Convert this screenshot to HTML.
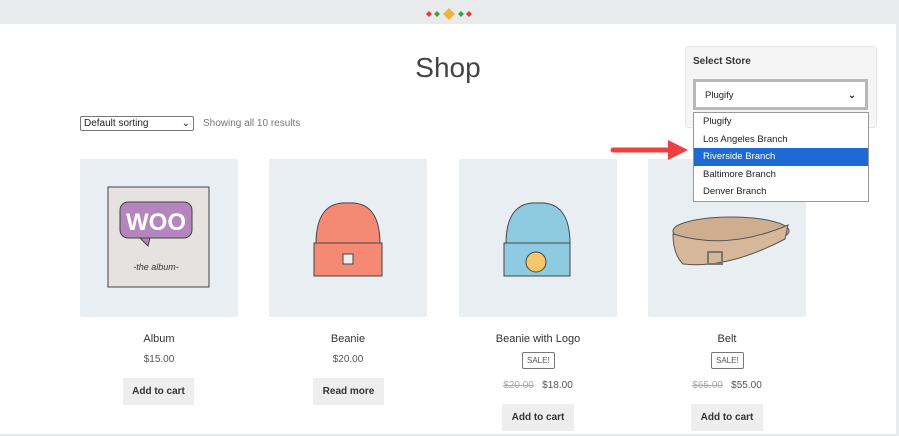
<!DOCTYPE html>
<html><head><meta charset="utf-8"><style>
*{margin:0;padding:0;box-sizing:border-box}
body{width:899px;height:436px;background:#e9eaec;font-family:"Liberation Sans",sans-serif;position:relative;overflow:hidden;color:#43454b}
#main{position:absolute;left:0;top:24px;width:896px;height:410px;background:#fff}
.abs{position:absolute}
h1{position:absolute;left:0;width:896px;top:52px;text-align:center;font-weight:normal;font-size:28px;color:#444}
.sort{left:80px;top:116px;width:114px;height:15px;border:1px solid #767676;border-radius:2px;font-size:10px;padding:1px 3px;color:#222}
.cnt{left:203px;top:118px;font-size:10px;color:#777}
.img{width:158px;height:158px;top:159px;background:#e8eef2;border-radius:2px}
.t{font-size:11px;text-align:center;width:158px;color:#333}
.p{font-size:10px;text-align:center;width:158px;color:#555}
.btn{background:#eeeeee;font-size:10px;font-weight:bold;text-align:center;line-height:27px;height:27px;color:#333}
.sale{border:1px solid #777;border-radius:2px;font-size:8px;padding:3px 4px;color:#555}
.s{text-decoration:line-through;color:#aaa}
</style></head><body>
<svg class="abs" style="left:424px;top:7px" width="50" height="14"><g fill="#e53935"><path d="M2 7l3-3 3 3-3 3z"/><path d="M42 7l3-3 3 3-3 3z"/></g><g fill="#43a047"><path d="M10 7l3-3 3 3-3 3z"/><path d="M34 7l3-3 3 3-3 3z"/></g><path d="M19 7l6-6 6 6-6 6z" fill="#f0b43c"/></svg>
<div id="main"></div>
<h1>Shop</h1>
<div class="abs sort">Default sorting<span style="float:right">⌄</span></div>
<div class="abs cnt">Showing all 10 results</div>

<div class="abs img" style="left:80px"><svg width="158" height="158"><rect x="28" y="28" width="101" height="100" fill="#e5e2df" stroke="#444"/><rect x="40" y="43" width="72" height="36" rx="8" fill="#b586bd" stroke="#444"/><path d="M60 79 l8 8 l2 -8z" fill="#b586bd" stroke="#444"/><text x="76" y="71" font-size="24" font-weight="bold" fill="#fff" text-anchor="middle" font-family="Liberation Sans">WOO</text><text x="76" y="111" font-size="9" font-style="italic" fill="#333" text-anchor="middle">-the  album-</text></svg></div>
<div class="abs img" style="left:269px"><svg width="158" height="158"><path d="M47 85 Q47 42 79 44 Q111 42 111 85z" fill="#f48a74" stroke="#444"/><rect x="45" y="84" width="68" height="33" fill="#f48a74" stroke="#444"/><rect x="74" y="95" width="10" height="10" fill="#eee" stroke="#444"/></svg></div>
<div class="abs img" style="left:459px"><svg width="158" height="158"><path d="M47 85 Q47 42 79 44 Q111 42 111 85z" fill="#8fcbe0" stroke="#444"/><rect x="45" y="84" width="66" height="33" fill="#8fcbe0" stroke="#444"/><circle cx="77" cy="103" r="10" fill="#f4c76a" stroke="#444"/></svg></div>
<div class="abs img" style="left:648px"><svg width="158" height="158"><ellipse cx="83" cy="72" rx="58" ry="14" fill="#cfae8f" stroke="#555"/><path d="M25 75 Q25 95 35 105 Q80 110 137 80 L140 66 Q80 92 25 75z" fill="#d6b79a" stroke="#555"/><rect x="60" y="93" width="14" height="12" fill="none" stroke="#777" stroke-width="2"/></svg></div>

<div class="abs t" style="left:80px;top:333px">Album</div>
<div class="abs p" style="left:80px;top:354px">$15.00</div>
<div class="abs btn" style="left:123px;top:378px;width:71px">Add to cart</div>
<div class="abs t" style="left:269px;top:333px">Beanie</div>
<div class="abs p" style="left:269px;top:354px">$20.00</div>
<div class="abs btn" style="left:313px;top:378px;width:71px">Read more</div>
<div class="abs t" style="left:459px;top:333px">Beanie with Logo</div>
<div class="abs sale" style="left:522px;top:352px">SALE!</div>
<div class="abs p" style="left:459px;top:380px"><span class="s">$20.00</span>&nbsp;&nbsp; $18.00</div>
<div class="abs btn" style="left:502px;top:404px;width:72px">Add to cart</div>
<div class="abs t" style="left:648px;top:333px">Belt</div>
<div class="abs sale" style="left:711px;top:352px">SALE!</div>
<div class="abs p" style="left:648px;top:380px"><span class="s">$65.00</span>&nbsp;&nbsp; $55.00</div>
<div class="abs btn" style="left:691px;top:404px;width:72px">Add to cart</div>

<div class="abs" style="left:685px;top:46px;width:192px;height:82px;background:#f5f5f5;border:1px solid #e6e6e6;border-radius:3px"></div>
<div class="abs" style="left:693px;top:56px;font-size:10px;font-weight:bold;color:#333">Select Store</div>
<div class="abs" style="left:693px;top:79px;width:175px;height:31px;background:#fff;border:3px solid #b8b8b8;font-size:9.5px;padding:8px 9px;color:#222">Plugify<span style="float:right;font-weight:bold">⌄</span></div>
<div class="abs" style="left:693px;top:112px;width:176px;height:90px;background:#fff;border:1px solid #999;font-size:9.5px;color:#222;line-height:17.6px">
<div style="padding-left:9px">Plugify</div>
<div style="padding-left:9px">Los Angeles Branch</div>
<div style="padding-left:9px;background:#1e6ad4;color:#fff">Riverside Branch</div>
<div style="padding-left:9px">Baltimore Branch</div>
<div style="padding-left:9px">Denver Branch</div>
</div>
<svg class="abs" style="left:610px;top:138px" width="80" height="24"><line x1="3" y1="12" x2="62" y2="12" stroke="#ee4040" stroke-width="5" stroke-linecap="round"/><path d="M58 2 L78 12 L58 22z" fill="#ee4040"/></svg>
</body></html>
